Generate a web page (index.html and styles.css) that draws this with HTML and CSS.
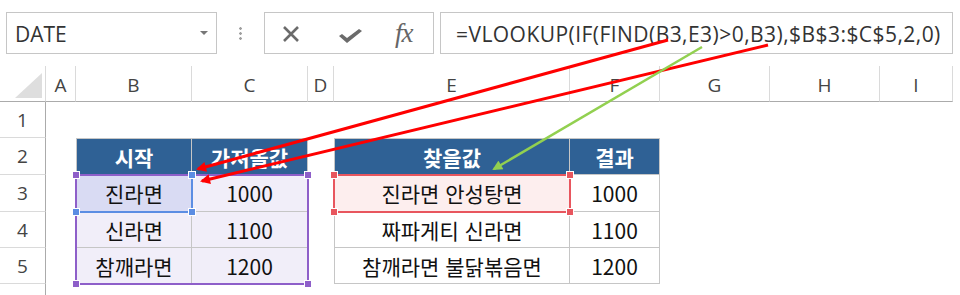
FILE: index.html
```html
<!DOCTYPE html>
<html lang="ko">
<head>
    <meta charset="UTF-8">
    <meta name="viewport" content="width=device-width, initial-scale=1.0">
    <title>VLOOKUP FIND</title>
    <link rel="stylesheet" href="styles.css">
</head>
<body>

    <div class="toolbar">
        <div class="namebox">
            <span>DATE</span>
            <span class="caret"></span>
        </div>
        <div class="grip"><span></span></div>
        <div class="fxbox">
            <svg class="ico-x" width="18" height="18" viewBox="0 0 18 18">
                <path d="M2 2 L16 16 M16 2 L2 16" stroke="#6b6b6b" stroke-width="2.6" fill="none"/>
            </svg>
            <svg class="ico-ok" width="25" height="16" viewBox="0 0 25 16">
                <path d="M1 8 L4 6 L9 10 L21 1 L24 3 L9 15 Z" fill="#6b6b6b"/>
            </svg>
            <span class="fx">fx</span>
        </div>
        <div class="formula">=VLOOKUP(IF(FIND(B3,E3)&gt;0,B3),$B$3:$C$5,2,0)</div>
    </div>

    <div class="sheet">
        <!-- column headers -->
        <div class="ch corner"></div>
        <div class="ch">A</div>
        <div class="ch">B</div>
        <div class="ch">C</div>
        <div class="ch">D</div>
        <div class="ch">E</div>
        <div class="ch">F</div>
        <div class="ch">G</div>
        <div class="ch">H</div>
        <div class="ch">I</div>

        <!-- row headers -->
        <div class="rh r1">1</div>
        <div class="rh r2">2</div>
        <div class="rh r3">3</div>
        <div class="rh r4">4</div>
        <div class="rh r5">5</div>
        <div class="rh r6"></div>

        <!-- table 1 -->
        <div class="cell th first top cB r2">시작</div>
        <div class="cell th top cC r2">가져올값</div>
        <div class="cell first cur cB r3">진라면</div>
        <div class="cell rng cC r3">1000</div>
        <div class="cell first rng cB r4">신라면</div>
        <div class="cell rng cC r4">1100</div>
        <div class="cell first rng cB r5">참깨라면</div>
        <div class="cell rng cC r5">1200</div>

        <!-- table 2 -->
        <div class="cell th first top cE r2">찾을값</div>
        <div class="cell th top cF r2">결과</div>
        <div class="cell first hit cE r3">진라면 안성탕면</div>
        <div class="cell cF r3">1000</div>
        <div class="cell first cE r4">짜파게티 신라면</div>
        <div class="cell cF r4">1100</div>
        <div class="cell first cE r5">참깨라면 불닭볶음면</div>
        <div class="cell cF r5">1200</div>

        <!-- formula reference boxes -->
        <div class="ref ref-blue">
            <i class="h tr"></i><i class="h bl"></i><i class="h br"></i>
        </div>
        <div class="ref ref-purple">
            <i class="h tl"></i><i class="h tr"></i><i class="h bl"></i><i class="h br"></i>
        </div>
        <div class="ref ref-red">
            <i class="h tl"></i><i class="h tr"></i><i class="h bl"></i><i class="h br"></i>
        </div>
    </div>

    <svg class="arrows" width="960" height="295" viewBox="0 0 960 295">
        <defs>
            <marker id="head-red" viewBox="0 0 10 10" refX="8" refY="5" markerWidth="12" markerHeight="10" orient="auto" markerUnits="userSpaceOnUse">
                <path d="M0 0 L10 5 L0 10 Z" fill="#ff0000"/>
            </marker>
            <marker id="head-green" viewBox="0 0 10 10" refX="8" refY="5" markerWidth="12" markerHeight="10" orient="auto" markerUnits="userSpaceOnUse">
                <path d="M0 0 L10 5 L0 10 Z" fill="#92d050"/>
            </marker>
        </defs>
        <line x1="668" y1="40" x2="198" y2="169" stroke="#ff0000" stroke-width="3" marker-end="url(#head-red)"/>
        <line x1="768" y1="45" x2="202" y2="181" stroke="#ff0000" stroke-width="3" marker-end="url(#head-red)"/>
        <line x1="702" y1="47" x2="494" y2="169" stroke="#92d050" stroke-width="2.5" marker-end="url(#head-green)"/>
    </svg>

</body>
</html>
```

FILE: styles.css
```css
body {
    margin: 0;
    width: 960px;
    height: 295px;
    overflow: hidden;
    position: relative;
    background-color: #fff;
    font-family: "Open Sans", "Noto Sans CJK KR", sans-serif;
    color: #333;
}

/* formula bar */
.toolbar {
    display: flex;
    align-items: center;
    height: 66px;
    padding-left: 6px;
    box-sizing: border-box;
}
.namebox {
    width: 211px;
    height: 42px;
    box-sizing: border-box;
    border: 1px solid #c6c6c6;
    display: flex;
    align-items: center;
    justify-content: space-between;
    padding: 2px 8px 0 8px;
    font-size: 21px;
}
.caret {
    width: 0;
    height: 0;
    border-left: 4px solid transparent;
    border-right: 4px solid transparent;
    border-top: 4px solid #777;
    margin-top: -2px;
}
.grip {
    width: 47px;
    display: flex;
    justify-content: center;
}
.grip span {
    width: 3px;
    height: 15px;
    background: radial-gradient(circle, #a0a0a0 1px, transparent 1.6px) 0 0 / 3px 5px repeat-y;
}
.fxbox {
    width: 170px;
    height: 42px;
    box-sizing: border-box;
    border: 1px solid #c6c6c6;
    display: flex;
    align-items: center;
    padding-left: 17px;
}
.ico-x {
    margin-top: 1px;
}
.ico-ok {
    margin-left: 38px;
    margin-top: 6px;
}
.fx {
    margin-left: 32px;
    font-family: "Liberation Serif", serif;
    font-style: italic;
    font-size: 27px;
    color: #666;
    letter-spacing: -1px;
}
.formula {
    width: 513px;
    height: 42px;
    margin-left: 6px;
    box-sizing: border-box;
    border: 1px solid #c6c6c6;
    display: flex;
    align-items: center;
    padding: 2px 0 0 15px;
    font-size: 21px;
    letter-spacing: 0.45px;
    white-space: nowrap;
}

/* sheet grid */
.sheet {
    display: grid;
    grid-template-columns: 46px 30px 116px 116px 26px 236px 90px 110px 110px 73px;
    grid-template-rows: 36px 36px 37px 37px 36px 36px 11px;
}
.ch {
    grid-row: 1;
    border-right: 1px solid #dadada;
    border-bottom: 1px solid #ababab;
    display: flex;
    align-items: center;
    justify-content: center;
    font-size: 19px;
    color: #444;
    padding-top: 2px;
}
.corner {
    justify-content: flex-end;
    align-items: flex-end;
    padding: 0 3px 3px 0;
}
.corner::before {
    content: "";
    width: 27px;
    height: 25px;
    background-color: #dedede;
    clip-path: polygon(100% 0, 100% 100%, 0 100%);
}
.rh {
    grid-column: 1;
    border-right: 1px solid #ababab;
    border-bottom: 1px solid #dadada;
    display: flex;
    align-items: center;
    justify-content: center;
    font-size: 19px;
    color: #444;
}
.rh.r6 {
    border-bottom: none;
}

.r1 { grid-row: 2; }
.r2 { grid-row: 3; }
.r3 { grid-row: 4; }
.r4 { grid-row: 5; }
.r5 { grid-row: 6; }
.r6 { grid-row: 7; }
.cB { grid-column: 3; }
.cC { grid-column: 4; }
.cE { grid-column: 6; }
.cF { grid-column: 7; }

.cell {
    border-right: 1px solid #c6c6c6;
    border-bottom: 1px solid #c6c6c6;
    display: flex;
    align-items: center;
    justify-content: center;
    font-family: "Noto Sans CJK KR", sans-serif;
    font-size: 21px;
    color: #111;
    white-space: nowrap;
}
.cell.first {
    border-left: 1px solid #c6c6c6;
}
.cell.top {
    border-top: 1px solid #c6c6c6;
}
.th {
    background-color: #2f6195;
    color: #fff;
    font-weight: bold;
}
.rng {
    background-color: #f1eef9;
}
.cur {
    background-color: #d9dbf3;
}
.hit {
    background-color: #fdeeee;
}

/* formula reference outlines */
.ref {
    position: relative;
    margin: -1px;
    border: 2px solid;
}
.ref-blue {
    grid-column: 3;
    grid-row: 4;
    border-color: #5b8de3;
}
.ref-purple {
    grid-column: 3 / 5;
    grid-row: 4 / 7;
    border-color: #8e5fc9;
}
.ref-red {
    grid-column: 6;
    grid-row: 4;
    border-color: #e8565e;
}
.h {
    position: absolute;
    z-index: 1;
    width: 6px;
    height: 6px;
    box-shadow: 0 0 0 1px #fff;
}
.ref-blue .h { background-color: #5b8de3; }
.ref-purple .h { background-color: #8e5fc9; }
.ref-red .h { background-color: #e8565e; }
.h.tl { top: -4px; left: -4px; }
.h.tr { top: -4px; right: -4px; }
.h.bl { bottom: -4px; left: -4px; }
.h.br { bottom: -4px; right: -4px; }

.arrows {
    position: absolute;
    top: 0;
    left: 0;
    pointer-events: none;
}
```
